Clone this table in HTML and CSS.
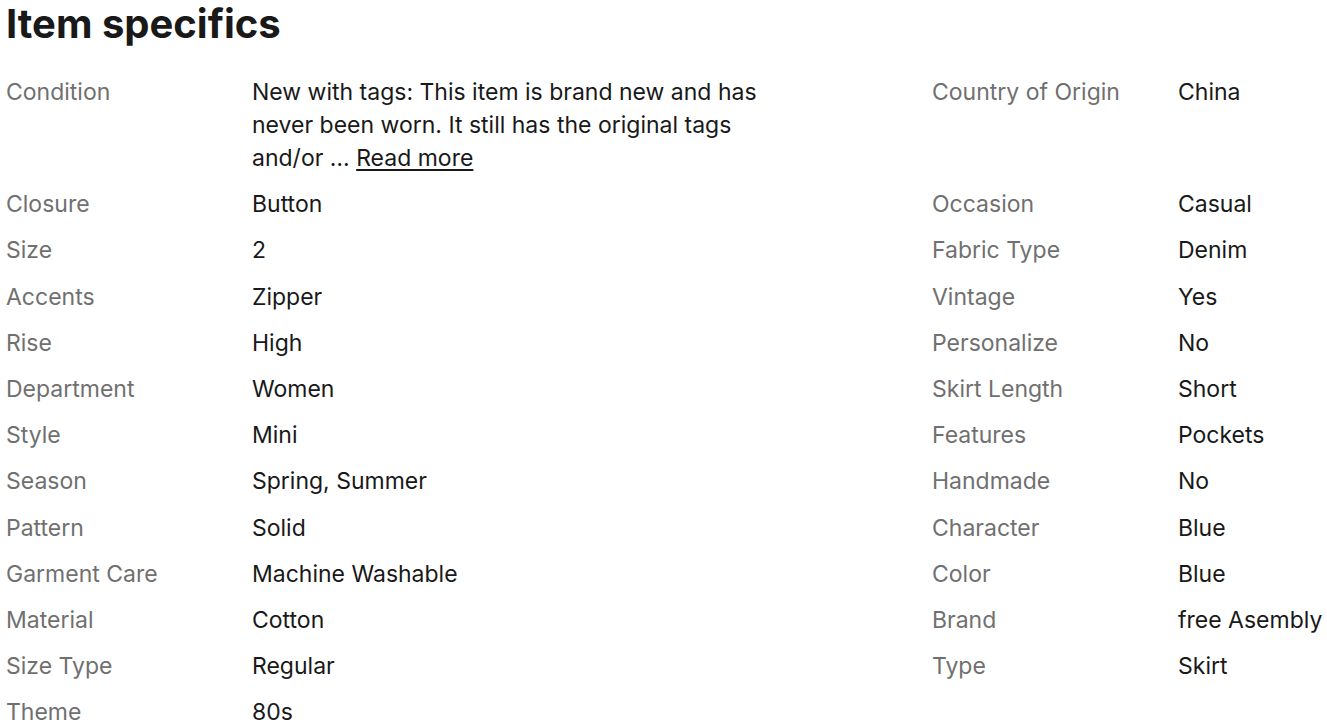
FILE: index.html
```html
<!DOCTYPE html>
<html lang="en">
<head>
<meta charset="utf-8">
<title>Item specifics</title>
<link rel="stylesheet" href="styles.css">
</head>
<body>
<section class="specs">
  <h2 class="title">Item specifics</h2>
  <div class="rows">
    <div class="row">
      <div class="col"><div class="label">Condition</div><div class="value cond"><span>New with tags: This item is brand new and has never been worn. It still has the original tags and/or …</span> <a class="more" href="#">Read more</a></div></div>
      <div class="col"><div class="label">Country of Origin</div><div class="value">China</div></div>
    </div>
    <div class="row">
      <div class="col"><div class="label">Closure</div><div class="value">Button</div></div>
      <div class="col"><div class="label">Occasion</div><div class="value">Casual</div></div>
    </div>
    <div class="row">
      <div class="col"><div class="label">Size</div><div class="value">2</div></div>
      <div class="col"><div class="label">Fabric Type</div><div class="value">Denim</div></div>
    </div>
    <div class="row">
      <div class="col"><div class="label">Accents</div><div class="value">Zipper</div></div>
      <div class="col"><div class="label">Vintage</div><div class="value">Yes</div></div>
    </div>
    <div class="row">
      <div class="col"><div class="label">Rise</div><div class="value">High</div></div>
      <div class="col"><div class="label">Personalize</div><div class="value">No</div></div>
    </div>
    <div class="row">
      <div class="col"><div class="label">Department</div><div class="value">Women</div></div>
      <div class="col"><div class="label">Skirt Length</div><div class="value">Short</div></div>
    </div>
    <div class="row">
      <div class="col"><div class="label">Style</div><div class="value">Mini</div></div>
      <div class="col"><div class="label">Features</div><div class="value">Pockets</div></div>
    </div>
    <div class="row">
      <div class="col"><div class="label">Season</div><div class="value">Spring, Summer</div></div>
      <div class="col"><div class="label">Handmade</div><div class="value">No</div></div>
    </div>
    <div class="row">
      <div class="col"><div class="label">Pattern</div><div class="value">Solid</div></div>
      <div class="col"><div class="label">Character</div><div class="value">Blue</div></div>
    </div>
    <div class="row">
      <div class="col"><div class="label">Garment Care</div><div class="value">Machine Washable</div></div>
      <div class="col"><div class="label">Color</div><div class="value">Blue</div></div>
    </div>
    <div class="row">
      <div class="col"><div class="label">Material</div><div class="value">Cotton</div></div>
      <div class="col"><div class="label">Brand</div><div class="value">free Asembly</div></div>
    </div>
    <div class="row">
      <div class="col"><div class="label">Size Type</div><div class="value">Regular</div></div>
      <div class="col"><div class="label">Type</div><div class="value">Skirt</div></div>
    </div>
    <div class="row">
      <div class="col"><div class="label">Theme</div><div class="value">80s</div></div>
    </div>
  </div>
</section>
</body>
</html>
```

FILE: styles.css
```css
html, body {
  margin: 0;
  padding: 0;
  background: #ffffff;
  overflow: hidden;
}
body {
  font-family: Inter, "Noto Sans", "Liberation Sans", sans-serif;
  color: #191919;
}
.specs {
  padding: 0 0 0 6px;
}
.title {
  margin: 0;
  font-size: 40px;
  line-height: 48px;
  font-weight: 700;
  letter-spacing: 0;
  color: #191919;
  padding-bottom: 28px;
}
.rows {
  display: flex;
  flex-direction: column;
}
.row {
  display: flex;
  padding-bottom: 13.2px;
}
.col {
  display: grid;
  grid-template-columns: 246px 1fr;
  width: 926px;
  flex: none;
  font-size: 23px;
  line-height: 33px;
}
.col + .col {
  width: auto;
  flex: 1;
}
.label {
  color: #707070;
}
.value {
  color: #191919;
}
.cond {
  max-width: 540px;
}
.more {
  color: #191919;
  text-decoration: underline;
  text-underline-offset: 3px;
}
```
